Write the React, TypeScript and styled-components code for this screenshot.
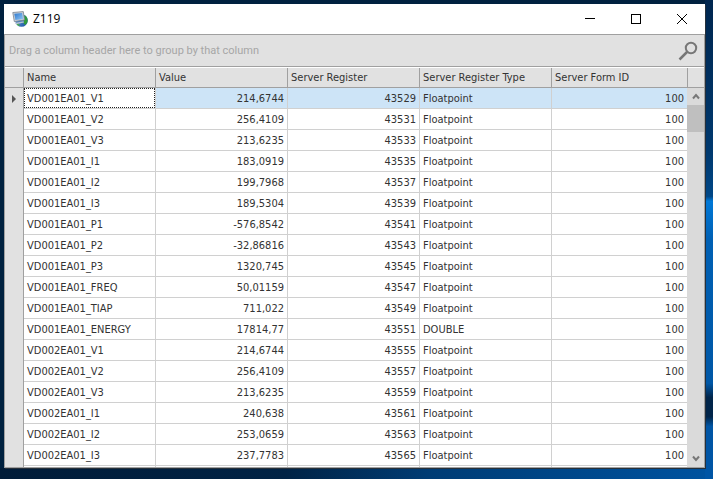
import React from "react";
import styled, { createGlobalStyle } from "styled-components";

const GlobalStyle = createGlobalStyle`
  * { box-sizing: border-box; }
  body { margin: 0; font-family: "DejaVu Sans Condensed", "DejaVu Sans", Tahoma, sans-serif; }
`;

const Desktop = styled.div`
  display: flex;
  min-height: 100vh;
  padding: 4px 8px 11px 4px;
  background:
    linear-gradient(180deg, #00264f 0, #00396f 32%, #004787 41%, #0078d7 42%, #0060b4 50%, #0057a6 80%, #01254a 83%, #01254a 87%, #0055a5 89%, #0055a5 100%) right top / 8px 100% no-repeat,
    linear-gradient(90deg, #011c38 0, #012345 40%, #003c74 60%, #0053a0 100%) left bottom / 100% 11px no-repeat,
    #00213f;
`;

const Window = styled.main`
  flex: 1;
  min-width: 0;
  display: flex;
  flex-direction: column;
  background: #fff;
  box-shadow: 1px 1px 0 #26303a;
`;

const TitleBar = styled.header`
  display: flex;
  align-items: center;
  height: 30px;
  padding-left: 8px;
`;

const Title = styled.h1`
  flex: 1;
  margin: 0 0 0 5px;
  font: 400 12px/16px "Open Sans", sans-serif;
  color: #000;
`;

const CaptionButton = styled.button`
  display: grid;
  place-items: center;
  width: 46px;
  height: 28px;
  padding: 0;
  border: 0;
  background: transparent;
`;

const Panel = styled.section`
  flex: 1;
  display: flex;
  flex-direction: column;
  border: 1px solid #a0a0a0;
`;

const GroupBar = styled.div`
  display: flex;
  align-items: center;
  justify-content: space-between;
  height: 32px;
  padding: 0 6px 0 4px;
  border-bottom: 1px solid #a0a0a0;
  background: #e1e1e1;
  color: #a6a6a6;
  font-family: Roboto, sans-serif;
  font-size: 11px;
`;

const SearchButton = styled.button`
  display: flex;
  padding: 0;
  border: 0;
  background: transparent;
`;

const Grid = styled.div`
  flex: 1;
  display: flex;
  padding-top: 1px;
`;

const Table = styled.table`
  flex: 1;
  align-self: flex-start;
  min-width: 0;
  table-layout: fixed;
  border-collapse: separate;
  border-spacing: 0;
  font-size: 11px;
  line-height: 14px;
  color: #333;
`;

const Col = styled.col<{ $kind: "marker" | "field" | "rest" }>`
  width: ${(p) => (p.$kind === "marker" ? "19px" : p.$kind === "field" ? "132px" : "auto")};
`;

const HeadCell = styled.th`
  height: 20px;
  padding: 0 3px;
  border-right: 1px solid #a0a0a0;
  border-bottom: 1px solid #a0a0a0;
  background: #e1e1e1;
  font-weight: 400;
  text-align: left;
  white-space: nowrap;

  &:last-child { border-right: 0; }
`;

const Row = styled.tr<{ $selected: boolean }>`
  background: ${(p) => (p.$selected ? "#cde4f7" : "#fff")};
`;

const Marker = styled.td`
  height: 21px;
  padding: 0 0 0 5px;
  border-right: 1px solid #a0a0a0;
  background: #e1e1e1;

  svg { display: block; }
`;

const Cell = styled.td<{ $right?: boolean; $last?: boolean }>`
  height: 21px;
  padding: 2px 3px 0;
  border-right: ${(p) => (p.$last ? "0" : "1px")} solid #d0d0d0;
  border-bottom: 1px solid #d0d0d0;
  text-align: ${(p) => (p.$right ? "right" : "left")};
  line-height: 18px;
  white-space: nowrap;
`;

const FocusFrame = styled.div`
  height: 20px;
  margin: -2px -3px 0;
  padding: 2px 3px 0;
  background: #fff;
  outline: 1px dotted #222;
  outline-offset: -1px;
`;

const EdgeCell = styled.td<{ $marker?: boolean; $last?: boolean }>`
  height: 1px;
  padding: 0;
  border-right: ${(p) => (p.$last ? "0" : "1px")} solid ${(p) => (p.$marker ? "#a0a0a0" : "#d0d0d0")};
  background: ${(p) => (p.$marker ? "#e1e1e1" : "#fff")};
`;

const ScrollColumn = styled.div`
  display: flex;
  flex-direction: column;
  width: 17px;
`;

const Corner = styled.div`
  height: 20px;
  border-left: 1px solid #a0a0a0;
  border-bottom: 1px solid #a0a0a0;
  background: #e1e1e1;
`;

const Track = styled.div`
  flex: 1;
  display: flex;
  flex-direction: column;
  background: #dadada;
`;

const ScrollButton = styled.button`
  display: grid;
  place-items: center;
  height: 17px;
  padding: 0;
  border: 0;
  background: transparent;
`;

const Thumb = styled.div`
  height: 27px;
  margin-bottom: auto;
  background: #bfbfbf;
`;

type Reading = [name: string, value: string, register: number, type: string];

const readings: Reading[] = [
  ["VD001EA01_V1", "214,6744", 43529, "Floatpoint"],
  ["VD001EA01_V2", "256,4109", 43531, "Floatpoint"],
  ["VD001EA01_V3", "213,6235", 43533, "Floatpoint"],
  ["VD001EA01_I1", "183,0919", 43535, "Floatpoint"],
  ["VD001EA01_I2", "199,7968", 43537, "Floatpoint"],
  ["VD001EA01_I3", "189,5304", 43539, "Floatpoint"],
  ["VD001EA01_P1", "-576,8542", 43541, "Floatpoint"],
  ["VD001EA01_P2", "-32,86816", 43543, "Floatpoint"],
  ["VD001EA01_P3", "1320,745", 43545, "Floatpoint"],
  ["VD001EA01_FREQ", "50,01159", 43547, "Floatpoint"],
  ["VD001EA01_TIAP", "711,022", 43549, "Floatpoint"],
  ["VD001EA01_ENERGY", "17814,77", 43551, "DOUBLE"],
  ["VD002EA01_V1", "214,6744", 43555, "Floatpoint"],
  ["VD002EA01_V2", "256,4109", 43557, "Floatpoint"],
  ["VD002EA01_V3", "213,6235", 43559, "Floatpoint"],
  ["VD002EA01_I1", "240,638", 43561, "Floatpoint"],
  ["VD002EA01_I2", "253,0659", 43563, "Floatpoint"],
  ["VD002EA01_I3", "237,7783", 43565, "Floatpoint"],
];

const headings = ["Name", "Value", "Server Register", "Server Register Type", "Server Form ID"];

const AppIcon = () => (
  <svg width="16" height="16" viewBox="0 0 16 16" aria-hidden="true">
    <defs>
      <linearGradient id="globe" x1="0" y1="0" x2="1" y2="1">
        <stop offset="0" stopColor="#6fa8e8" />
        <stop offset="1" stopColor="#174f9e" />
      </linearGradient>
      <linearGradient id="screen" x1="0" y1="0" x2="1" y2="1">
        <stop offset="0" stopColor="#2f78cc" />
        <stop offset="1" stopColor="#8fc6f7" />
      </linearGradient>
    </defs>
    <circle cx="9.500" cy="9.500" r="6.300" fill="url(#globe)" />
    <path d="M12.500 4c2.500 1.500 3.500 4 3 7L13.500 14l-2-1.500 .5-3z" fill="#2f9a3c" />
    <path d="M4 12.500l3 .5 1 2-2-.3z" fill="#49ab4f" />
    <path d="M.8 1.500L11.300 .6 12.500 9 2.300 10.600z" fill="#c9d0d7" stroke="#77828f" strokeWidth=".8" />
    <path d="M2.300 2.800L10.100 2 11.100 7.900 3.400 9z" fill="url(#screen)" />
    <path d="M2.800 12L11.500 10.200 12 11.500 4.200 13.200z" fill="#b9c3cd" />
  </svg>
);

export default function App() {
  return (
    <>
      <GlobalStyle />
      <Desktop>
        <Window>
          <TitleBar>
            <AppIcon />
            <Title>Z119</Title>
            <CaptionButton aria-label="Minimize">
              <svg width="10" height="10" shapeRendering="crispEdges"><path d="M0 4.500h10" stroke="#000" /></svg>
            </CaptionButton>
            <CaptionButton aria-label="Maximize">
              <svg width="10" height="10" shapeRendering="crispEdges"><path d="M.5 .5h9v9h-9z" fill="none" stroke="#000" /></svg>
            </CaptionButton>
            <CaptionButton aria-label="Close">
              <svg width="10" height="10"><path d="M0 0l10 10M10 0L0 10" stroke="#000" /></svg>
            </CaptionButton>
          </TitleBar>
          <Panel>
            <GroupBar>
              Drag a column header here to group by that column
              <SearchButton aria-label="Find">
                <svg width="20" height="20" fill="none" stroke="#777">
                  <circle cx="13" cy="7" r="5.200" strokeWidth="2" />
                  <path d="M9 11L1.500 18.500" strokeWidth="2.500" />
                </svg>
              </SearchButton>
            </GroupBar>
            <Grid>
              <Table>
                <colgroup>
                  <Col $kind="marker" />
                  <Col $kind="field" />
                  <Col $kind="field" />
                  <Col $kind="field" />
                  <Col $kind="field" />
                  <Col $kind="rest" />
                </colgroup>
                <thead>
                  <tr>
                    <HeadCell aria-label="Current row" />
                    {headings.map((h) => (
                      <HeadCell key={h} scope="col">{h}</HeadCell>
                    ))}
                  </tr>
                </thead>
                <tbody>
                  {readings.map(([name, value, register, type], i) => (
                    <Row key={name} $selected={i === 0}>
                      <Marker>
                        {i === 0 && (
                          <svg width="8" height="8"><path d="M2 0L6 4 2 8z" fill="#555" /></svg>
                        )}
                      </Marker>
                      <Cell>{i === 0 ? <FocusFrame>{name}</FocusFrame> : name}</Cell>
                      <Cell $right>{value}</Cell>
                      <Cell $right>{register}</Cell>
                      <Cell>{type}</Cell>
                      <Cell $right $last>100</Cell>
                    </Row>
                  ))}
                  <tr aria-hidden="true">
                    <EdgeCell $marker />
                    <EdgeCell />
                    <EdgeCell />
                    <EdgeCell />
                    <EdgeCell />
                    <EdgeCell $last />
                  </tr>
                </tbody>
              </Table>
              <ScrollColumn>
                <Corner />
                <Track>
                  <ScrollButton aria-label="Scroll up">
                    <svg width="8" height="7" fill="none" stroke="#777" strokeWidth="2"><path d="M1 5.500L4 2 7 5.500" /></svg>
                  </ScrollButton>
                  <Thumb />
                  <ScrollButton aria-label="Scroll down">
                    <svg width="8" height="7" fill="none" stroke="#777" strokeWidth="2"><path d="M1 1.500L4 5 7 1.500" /></svg>
                  </ScrollButton>
                </Track>
              </ScrollColumn>
            </Grid>
          </Panel>
        </Window>
      </Desktop>
    </>
  );
}
